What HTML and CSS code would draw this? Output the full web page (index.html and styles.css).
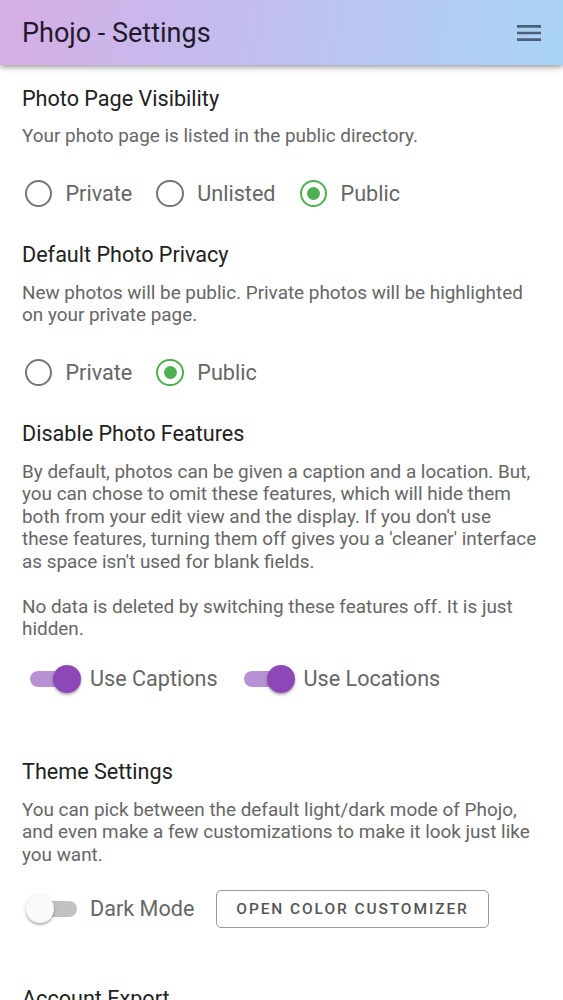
FILE: index.html
```html
<!DOCTYPE html>
<html lang="en">
<head>
<meta charset="utf-8">
<title>Phojo - Settings</title>
<link rel="stylesheet" href="styles.css">
</head>
<body>
<header class="appbar">
  <h1 class="appbar-title">Phojo - Settings</h1>
  <svg class="menu-icon" viewBox="0 0 24 24" width="32" height="32" aria-hidden="true"><path d="M3 18h18v-2H3v2zm0-5h18v-2H3v2zm0-7v2h18V6H3z"/></svg>
</header>
<main class="content">
  <section class="section first">
    <h2 class="section-title">Photo Page Visibility</h2>
    <p class="desc">Your photo page is listed in the public directory.</p>
    <div class="controls radios">
      <label class="radio"><span class="radio-circle"></span><span class="label">Private</span></label>
      <label class="radio"><span class="radio-circle"></span><span class="label">Unlisted</span></label>
      <label class="radio checked"><span class="radio-circle"></span><span class="label">Public</span></label>
    </div>
  </section>
  <section class="section">
    <h2 class="section-title">Default Photo Privacy</h2>
    <p class="desc">New photos will be public. Private photos will be highlighted on your private page.</p>
    <div class="controls radios">
      <label class="radio"><span class="radio-circle"></span><span class="label">Private</span></label>
      <label class="radio checked"><span class="radio-circle"></span><span class="label">Public</span></label>
    </div>
  </section>
  <section class="section">
    <h2 class="section-title">Disable Photo Features</h2>
    <p class="desc">By default, photos can be given a caption and a location. But, you can chose to omit these features, which will hide them both from your edit view and the display. If you don't use these features, turning them off gives you a 'cleaner' interface as space isn't used for blank fields.</p>
    <p class="desc">No data is deleted by switching these features off. It is just hidden.</p>
    <div class="controls toggles">
      <label class="switch on"><span class="switch-box"><span class="track"></span><span class="thumb"></span></span><span class="label">Use Captions</span></label>
      <label class="switch on"><span class="switch-box"><span class="track"></span><span class="thumb"></span></span><span class="label">Use Locations</span></label>
    </div>
  </section>
  <section class="section wide-gap">
    <h2 class="section-title">Theme Settings</h2>
    <p class="desc">You can pick between the default light/dark mode of Phojo, and even make a few customizations to make it look just like you want.</p>
    <div class="controls theme-row">
      <label class="switch"><span class="switch-box"><span class="track"></span><span class="thumb"></span></span><span class="label">Dark Mode</span></label>
      <button class="outline-btn" type="button">Open Color Customizer</button>
    </div>
  </section>
  <section class="section export-gap">
    <h2 class="section-title">Account Export</h2>
  </section>
</main>
</body>
</html>
```

FILE: styles.css
```css
* { box-sizing: border-box; }

body {
  margin: 0;
  font-family: Roboto, "Noto Sans", "Liberation Sans", sans-serif;
  background: #ffffff;
  color: #212121;
}

.appbar {
  height: 65px;
  display: flex;
  align-items: center;
  justify-content: space-between;
  padding: 0 22px;
  background: linear-gradient(100deg, #d6aee5 0%, #c4bcee 40%, #b6c8f1 70%, #a9d4f6 100%);
  box-shadow: 0 2px 4px -1px rgba(0,0,0,0.25), 0 4px 5px 0 rgba(0,0,0,0.14), 0 1px 10px 0 rgba(0,0,0,0.08);
  position: relative;
  z-index: 1;
}

.appbar-title {
  margin: 0;
  font-size: 27px;
  line-height: 32px;
  font-weight: 400;
  color: #1f1a2c;
}

.menu-icon {
  fill: #4b6078;
  margin-right: -4px;
  margin-top: 1px;
}

.content {
  padding: 0 22px;
}

.section { padding-top: 25px; }
.section.first { padding-top: 19px; }
.section.wide-gap { padding-top: 57px; }
.section.export-gap { padding-top: 54px; }

.section-title {
  margin: 0;
  font-size: 21.6px;
  line-height: 30px;
  font-weight: 400;
  color: #212121;
}

.desc {
  margin: 22.5px 0 0;
  font-size: 18.9px;
  line-height: 22.5px;
  color: #666666;
}

.section-title + .desc { margin-top: 12px; }
.section.first .section-title + .desc { margin-top: 11px; }

.controls {
  display: flex;
  align-items: center;
  height: 42px;
  margin-top: 25px;
}

.controls.toggles { margin-top: 17px; }
.controls.theme-row { margin-top: 22px; }

.label {
  font-size: 21.6px;
  color: #666666;
  line-height: 26px;
}

.radios { gap: 24px; padding-left: 2.5px; }

.radio {
  display: flex;
  align-items: center;
  gap: 13.5px;
}

.radio-circle {
  width: 27.5px;
  height: 27.5px;
  border-radius: 50%;
  border: 2.7px solid #757575;
  display: flex;
  align-items: center;
  justify-content: center;
}

.radio.checked .radio-circle { border-color: #4caf50; }
.radio.checked .radio-circle::after {
  content: "";
  width: 13px;
  height: 13px;
  border-radius: 50%;
  background: #4caf50;
}

.toggles { gap: 22px; padding-left: 4px; }

.switch {
  display: flex;
  align-items: center;
  gap: 9px;
}

.switch-box {
  position: relative;
  width: 55px;
  height: 28px;
  flex: none;
}

.track {
  position: absolute;
  left: 4px;
  top: 6px;
  width: 47px;
  height: 16px;
  border-radius: 8px;
  background: #c2c2c2;
}

.thumb {
  position: absolute;
  left: 0;
  top: 0;
  width: 28px;
  height: 28px;
  border-radius: 50%;
  background: #fafafa;
  box-shadow: 0 2px 2px rgba(0,0,0,0.22), 0 1px 5px rgba(0,0,0,0.14);
}

.switch.on .track { background: #b892d5; }
.switch.on .thumb { left: 27px; background: #8e47b6; }

.theme-row { padding-left: 4px; gap: 22px; }

.outline-btn {
  height: 38px;
  padding: 0 19px;
  border: 1px solid #9a9a9a;
  border-radius: 5px;
  background: #ffffff;
  font-family: Roboto, "Noto Sans", "Liberation Sans", sans-serif;
  font-size: 15.5px;
  font-weight: 500;
  letter-spacing: 1.9px;
  text-transform: uppercase;
  color: #555555;
}
```
